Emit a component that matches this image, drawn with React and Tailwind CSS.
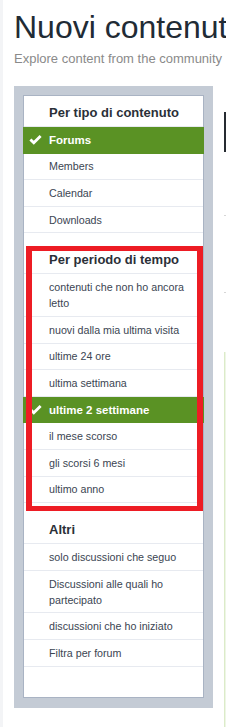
import React from 'react';

const sections = [
  {
    title: 'Per tipo di contenuto',
    items: ['Forums', 'Members', 'Calendar', 'Downloads'],
    active: 'Forums',
  },
  {
    title: 'Per periodo di tempo',
    items: [
      'contenuti che non ho ancora letto',
      'nuovi dalla mia ultima visita',
      'ultime 24 ore',
      'ultima settimana',
      'ultime 2 settimane',
      'il mese scorso',
      'gli scorsi 6 mesi',
      'ultimo anno',
    ],
    active: 'ultime 2 settimane',
  },
  {
    title: 'Altri',
    items: [
      'solo discussioni che seguo',
      'Discussioni alle quali ho partecipato',
      'discussioni che ho iniziato',
      'Filtra per forum',
    ],
  },
];

// heavy check mark, white on green
const Check = () => (
  <svg className="absolute left-[6px] top-1/2 -translate-y-1/2" width="13" height="10" viewBox="0 0 13 10">
    <path d="M0.4 5.4 L2.4 3.4 L4.8 5.8 L10.6 0 L12.6 2 L4.8 9.8 Z" fill="#ffffff" />
  </svg>
);

const Row = ({ label, active }) =>
  active ? (
    <li className="relative -mx-px bg-[#5a9224] border-b border-[#5a9224] py-[4.8px] pl-[26px] pr-[8px] text-[11.5px] leading-[16px] font-bold text-white">
      <Check />
      {label}
    </li>
  ) : (
    <li className="border-b border-[#e7eaf0] py-[4.8px] pl-[25px] pr-[8px] text-[10.7px] leading-[16px] text-[#3b4552]">
      {label}
    </li>
  );

export default function App() {
  return (
    <div
      className="w-[226px] h-[727px] overflow-hidden bg-white border-l-[3px] border-[#f3f4f6] flex flex-col"
      style={{ fontFamily: '"Liberation Sans", Arial, sans-serif' }}
    >
      <h1 className="ml-[11px] mt-[8px] text-[32px] leading-[38px] text-[#212b35] whitespace-nowrap">
        Nuovi contenuti
      </h1>
      <p className="ml-[11px] mt-[4px] text-[13px] leading-[18px] text-[#8a8a8a] whitespace-nowrap">
        Explore content from the community
      </p>

      <div className="mt-[18px] flex flex-1 gap-[11px]">
        {/* sidebar */}
        <div className="ml-[11px] w-[199px] shrink-0 self-start bg-[#c4cbd5] p-[9px] pb-[10px]">
          <div className="relative bg-white border border-[#a9b3c3] pb-[30px]">
            {sections.map((s, i) => (
              <div key={s.title} className={i > 0 ? 'mt-[10px]' : ''}>
                <h3 className="border-b border-[#e7eaf0] pt-[8px] pb-[4px] pl-[25px] text-[13px] leading-[18px] font-bold text-[#2b3038]">
                  {s.title}
                </h3>
                <ul>
                  {s.items.map((it) => (
                    <Row key={it} label={it} active={it === s.active} />
                  ))}
                </ul>
              </div>
            ))}
            {/* red annotation frame */}
            <div className="pointer-events-none absolute left-[2px] top-[150px] w-[177px] h-[265px] border-x-[6px] border-y-[5px] border-[#ed1c24]" />
          </div>
        </div>

        {/* cut-off main column */}
        <div className="w-[20px] shrink-0 flex flex-col">
          <div className="mt-[26px] h-[40px] bg-[#262b31]" />
          <div className="mt-[63px] h-px bg-[#d6d6d6]" />
          <div className="mt-[76px] h-px bg-[#d6d6d6]" />
          <div className="mt-[59px] flex-1 bg-[#eef6e6] border-l border-[#dcebc9]" />
        </div>
      </div>
    </div>
  );
}
